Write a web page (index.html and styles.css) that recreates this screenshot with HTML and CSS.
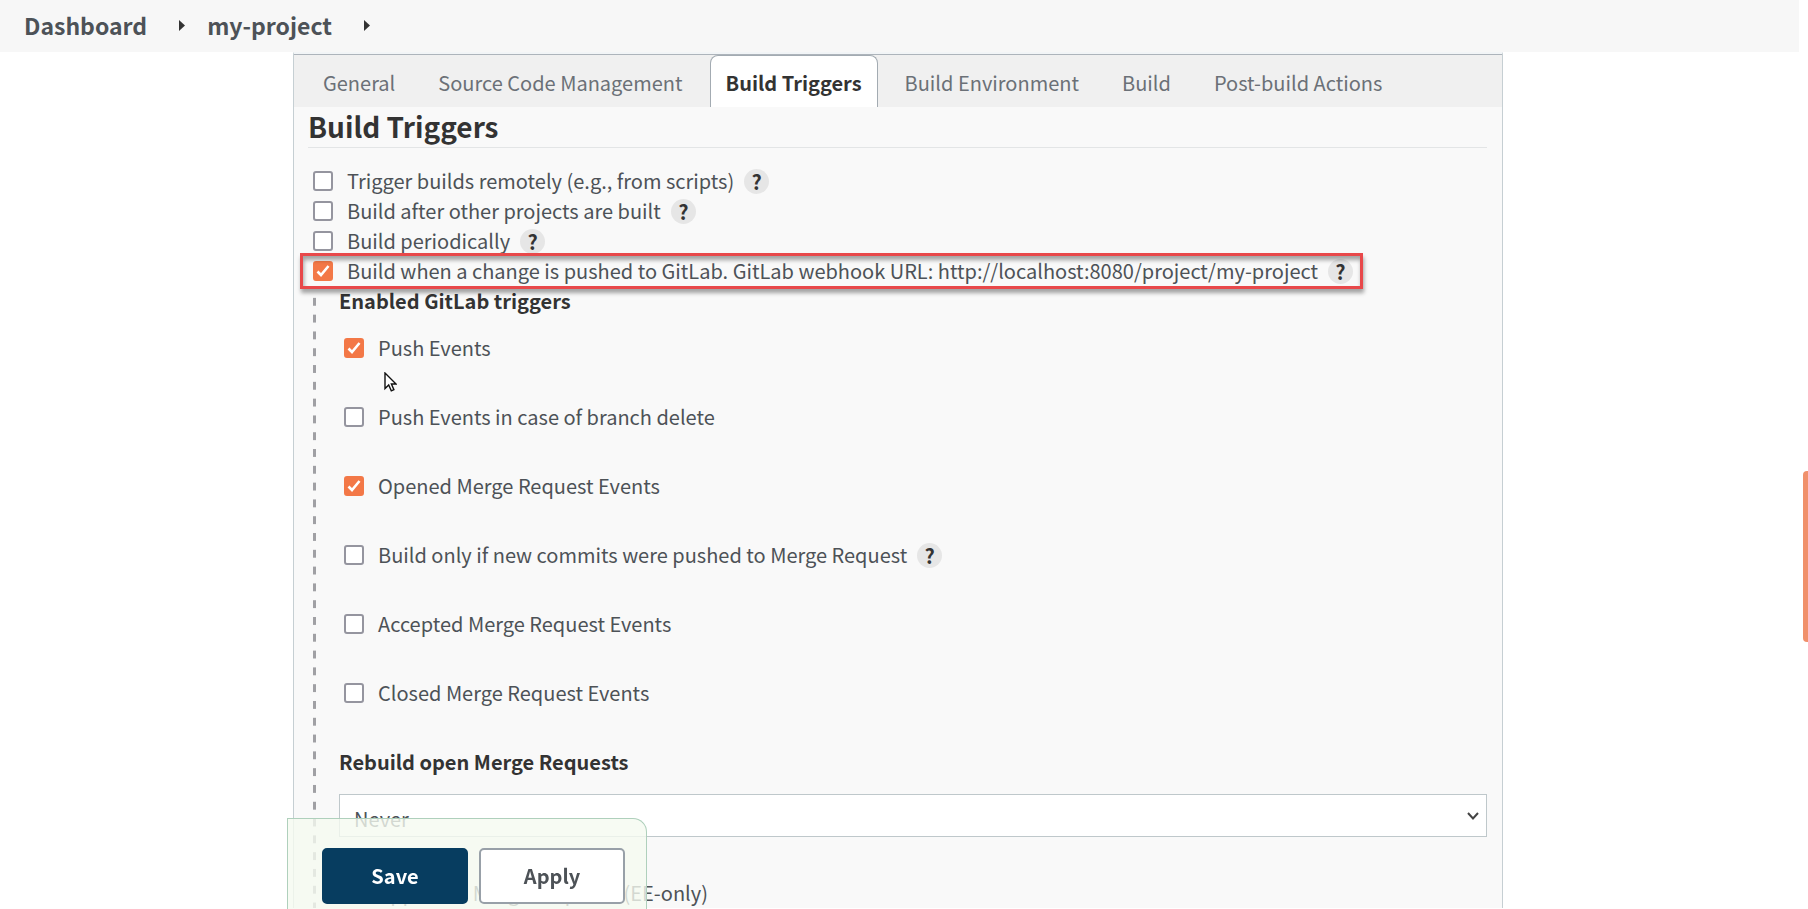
FILE: index.html
```html
<!DOCTYPE html>
<html lang="en">
<head>
<meta charset="utf-8">
<title>my-project Config</title>
<link rel="stylesheet" href="styles.css">
</head>
<body>
<header class="breadcrumbs">
  <nav class="crumbs" aria-label="Breadcrumb">
    <a href="#">Dashboard</a>
    <svg class="crumb-arrow" viewBox="0 0 6 11" aria-hidden="true"><path d="M0 0 6 5.500 0 11z"/></svg>
    <a href="#">my-project</a>
    <svg class="crumb-arrow" viewBox="0 0 6 11" aria-hidden="true"><path d="M0 0 6 5.500 0 11z"/></svg>
  </nav>
</header>
<main class="panel">
  <nav class="tabs" aria-label="Configuration sections">
    <a class="tab" href="#">General</a>
    <a class="tab" href="#">Source Code Management</a>
    <a class="tab tab-active" href="#" aria-current="page">Build Triggers</a>
    <a class="tab" href="#">Build Environment</a>
    <a class="tab" href="#">Build</a>
    <a class="tab" href="#">Post-build Actions</a>
  </nav>
  <form class="config">
    <h1 class="title">Build Triggers</h1>
    <div class="triggers">
      <div class="option"><label class="check"><input type="checkbox">Trigger builds remotely (e.g., from scripts)</label><button class="help" type="button" aria-label="Help">?</button></div>
      <div class="option"><label class="check"><input type="checkbox">Build after other projects are built</label><button class="help" type="button" aria-label="Help">?</button></div>
      <div class="option"><label class="check"><input type="checkbox">Build periodically</label><button class="help" type="button" aria-label="Help">?</button></div>
      <div class="option highlighted"><label class="check"><input type="checkbox" checked>Build when a change is pushed to GitLab. GitLab webhook URL: http://localhost:8080/project/my-project</label><button class="help" type="button" aria-label="Help">?</button></div>
    </div>
    <div class="nested">
      <h2 class="subtitle">Enabled GitLab triggers</h2>
      <div class="events">
        <div class="option"><label class="check"><input type="checkbox" checked>Push Events</label>
          <svg class="pointer" viewBox="0 0 13 20" aria-hidden="true"><path d="M1 1v15.500l3.700-3.500 2.600 5.800 2.600-1.200-2.500-5.600H12z"/></svg>
        </div>
        <div class="option"><label class="check"><input type="checkbox">Push Events in case of branch delete</label></div>
        <div class="option"><label class="check"><input type="checkbox" checked>Opened Merge Request Events</label></div>
        <div class="option"><label class="check"><input type="checkbox">Build only if new commits were pushed to Merge Request</label><button class="help" type="button" aria-label="Help">?</button></div>
        <div class="option"><label class="check"><input type="checkbox">Accepted Merge Request Events</label></div>
        <div class="option"><label class="check"><input type="checkbox">Closed Merge Request Events</label></div>
      </div>
      <label class="subtitle" for="rebuild">Rebuild open Merge Requests</label>
      <div class="select-wrap">
        <select id="rebuild"><option>Never</option></select>
        <svg class="chevron" viewBox="0 0 12 8" aria-hidden="true"><path d="M1 1l5 5.500L11 1"/></svg>
      </div>
      <div class="events last">
        <div class="option"><label class="check"><input type="checkbox">Approved Merge Requests (EE-only)</label></div>
      </div>
    </div>
  </form>
</main>
<div class="actions">
  <button class="btn btn-primary" type="button">Save</button>
  <button class="btn" type="button">Apply</button>
</div>
<div class="edge-handle"></div>
</body>
</html>
```
FILE: styles.css
```css
* { box-sizing: border-box; }
body {
  margin: 0;
  background: #fff;
  color: #4d5257;
  font-family: "Noto Sans CJK SC", "Noto Sans", sans-serif;
  font-size: 20px;
  line-height: 30px;
}
a { color: inherit; text-decoration: none; }
button, select, input { font: inherit; color: inherit; margin: 0; }

.breadcrumbs {
  margin-right: 9px;
  padding: 0 0 2px 24px;
  background: #f7f7f7;
}
.crumbs {
  display: flex;
  align-items: center;
  height: 50px;
  font-size: 23px;
  font-weight: 700;
}
.crumb-arrow { width: 6px; height: 11px; margin: 0 22px 0 32px; fill: #333; }

.panel {
  margin: 0 305px 0 293px;
  border: 1px solid #c6cfd3;
  border-top: 2px solid #f2f5f7;
  border-bottom: 0;
  background: #f9f9f9;
}
.tabs {
  display: flex;
  gap: 11px;
  height: 53px;
  padding-left: 13px;
  border-top: 1px solid #adb4bb;
  background: #f0f0f0;
  color: #6b7077;
}
.tab {
  padding: 0 15px;
  border: 1px solid transparent;
  border-bottom: 0;
  line-height: 54px;
  white-space: nowrap;
}
.tab-active {
  border-color: #a3abb2;
  border-radius: 8px 8px 0 0;
  background: #fff;
  color: #333;
  font-weight: 700;
}

.config { padding: 0 15px 0 14px; }
.title {
  margin: 0;
  padding-bottom: 2px;
  border-bottom: 1px solid #e3e5e6;
  color: #333;
  font-size: 28px;
  line-height: 38px;
}
.triggers {
  display: flex;
  flex-direction: column;
  align-items: flex-start;
  padding: 18px 0 0 5px;
}
.option { position: relative; display: flex; align-items: center; gap: 10px; height: 30px; }
.check { display: flex; align-items: center; gap: 14px; white-space: nowrap; }
.check input {
  appearance: none;
  width: 20px;
  height: 20px;
  border: 2px solid #95959f;
  border-radius: 3px;
  background: #fff;
}
.check input:checked {
  border-color: #f37847;
  background: #f37847 url("data:image/svg+xml,%3Csvg xmlns='http://www.w3.org/2000/svg' viewBox='0 0 16 16'%3E%3Cpath d='M2.500 8.500l3.500 3.500 7.500-9' fill='none' stroke='white' stroke-width='2.600'/%3E%3C/svg%3E") center / 16px no-repeat;
}
.help {
  width: 25px;
  height: 25px;
  padding: 0;
  border: 0;
  border-radius: 50%;
  background: #e6e6e6;
  color: #333;
  font-weight: 700;
  line-height: 25px;
}
.highlighted::after {
  content: "";
  position: absolute;
  inset: -3px -10px -3px -13px;
  border: 3px solid #e8484a;
  box-shadow: 1px 4px 4px rgba(0, 0, 0, .35), inset 1px 4px 4px rgba(0, 0, 0, .35);
  pointer-events: none;
}

.nested {
  margin-left: 5px;
  padding-left: 26px;
  background: linear-gradient(to bottom, #a0a0a4 0 3px, transparent 3px 12px, #a0a0a4 12px) 0 0 / 3px 17px;
  background-repeat: no-repeat round;
}
.subtitle {
  display: block;
  margin: 0;
  color: #333;
  font-size: 20px;
  font-weight: 700;
  line-height: 30px;
}
.events { display: grid; gap: 39px; padding: 17px 0 39px 5px; }
.pointer {
  position: absolute;
  left: 40px;
  top: 39px;
  width: 13px;
  height: 20px;
  fill: #fff;
  stroke: #111;
  stroke-width: 1.4;
}
.select-wrap { position: relative; margin-top: 17px; }
.select-wrap select {
  display: block;
  width: 100%;
  height: 43px;
  padding: 6px 14px 0;
  appearance: none;
  border: 1px solid #bfc8cb;
  border-radius: 0;
  background: #fff;
}
.chevron {
  position: absolute;
  right: 8px;
  top: 18px;
  width: 12px;
  height: 8px;
  fill: none;
  stroke: #444;
  stroke-width: 2;
}
.last { padding: 41px 0 0 5px; }

.actions {
  position: fixed;
  left: 287px;
  bottom: 0;
  display: flex;
  gap: 11px;
  padding: 29px 21px 5px 34px;
  border: 1px solid #afd0bc;
  border-bottom: 0;
  border-radius: 0 14px 0 0;
  background: rgba(245, 250, 240, .8);
}
.btn {
  width: 146px;
  height: 56px;
  border: 2px solid #98a0a8;
  border-radius: 5px;
  background: #fff;
  font-weight: 700;
}
.btn-primary { border-color: #073d60; background: #073d60; color: #fff; }

.edge-handle {
  position: fixed;
  right: 0;
  top: 471px;
  width: 5px;
  height: 171px;
  border-radius: 4px 0 0 4px;
  background: #f0906b;
}
```
